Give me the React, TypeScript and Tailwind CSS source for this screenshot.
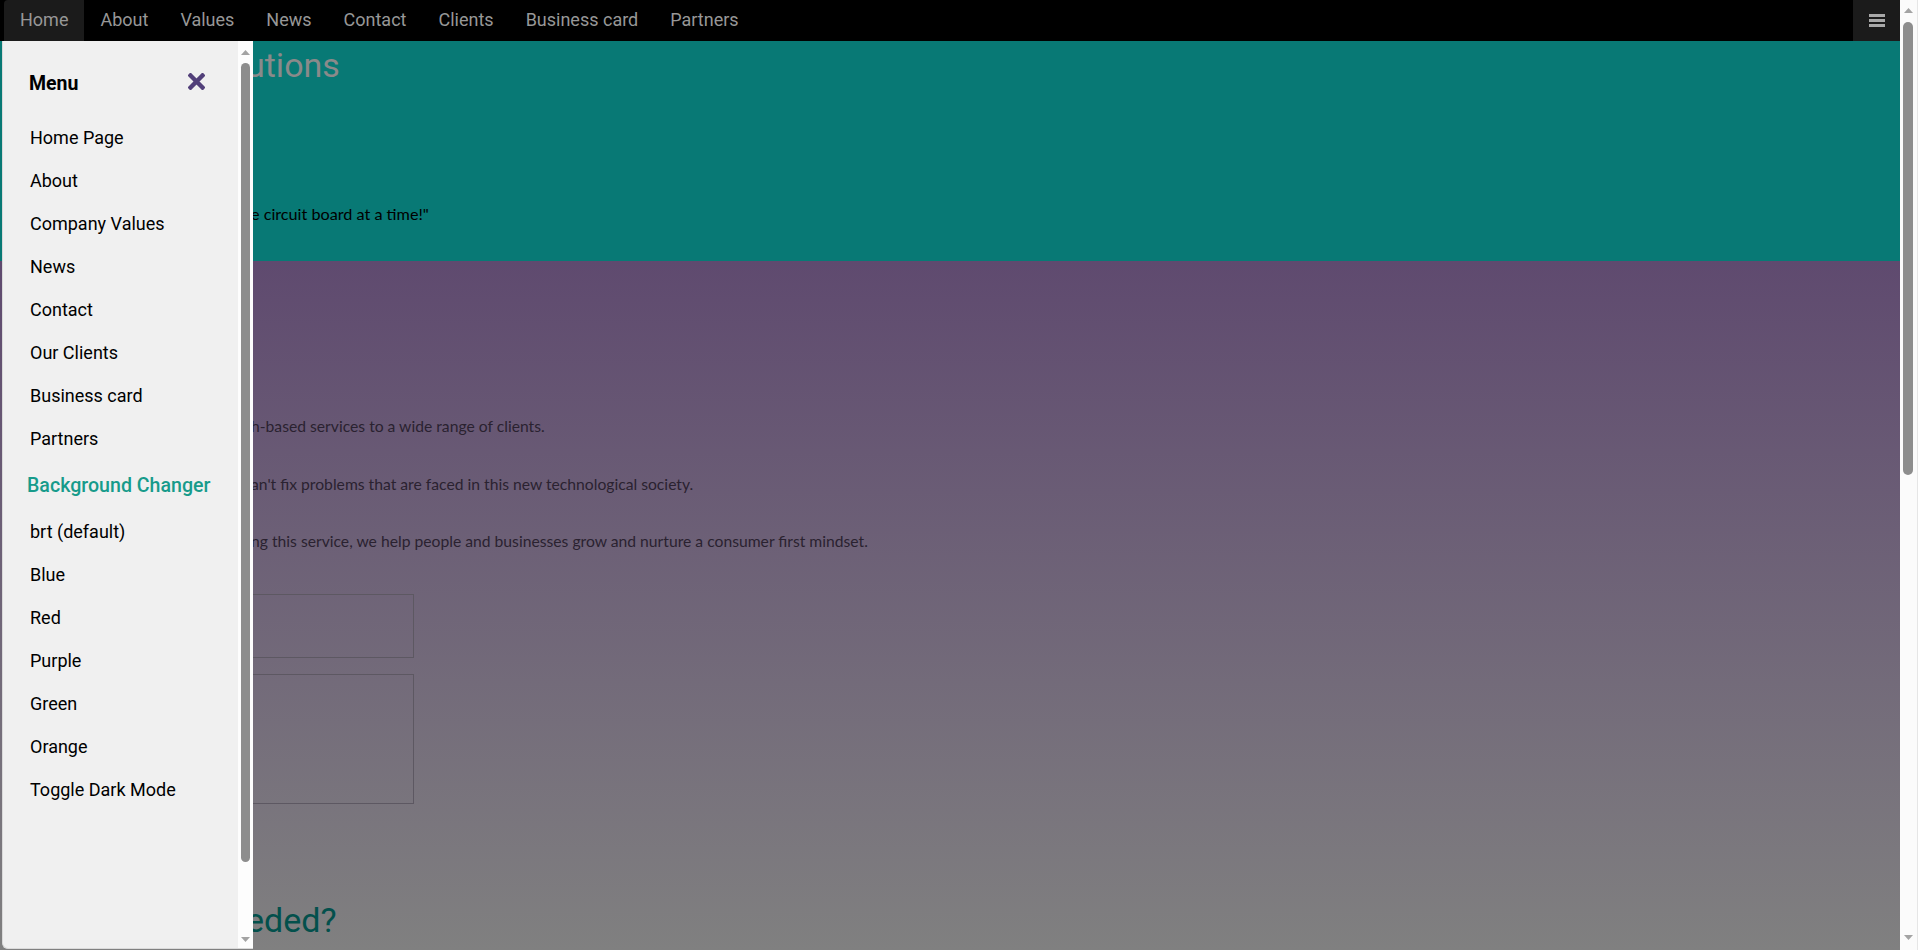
import React from "react";

const navItems = ["Home", "About", "Values", "News", "Contact", "Clients", "Business card", "Partners"];
const menuItems = ["Home Page", "About", "Company Values", "News", "Contact", "Our Clients", "Business card", "Partners"];
const bgItems = ["brt (default)", "Blue", "Red", "Purple", "Green", "Orange", "Toggle Dark Mode"];

function UpArrow() {
  return (
    <svg width="9" height="5" viewBox="0 0 9 5">
      <polygon points="4.5,0 9,5 0,5" fill="#a3a3a3" />
    </svg>
  );
}
function DownArrow() {
  return (
    <svg width="9" height="5" viewBox="0 0 9 5">
      <polygon points="0,0 9,0 4.5,5" fill="#a3a3a3" />
    </svg>
  );
}

export default function App() {
  const roboto = { fontFamily: "Roboto, 'Liberation Sans', sans-serif" };
  const lato = { fontFamily: "Lato, 'Open Sans', sans-serif" };
  return (
    <div className="relative flex h-[950px] w-[1918px] overflow-hidden bg-white" style={roboto}>
      {/* main column */}
      <div className="flex w-[1900px] flex-col">
        {/* top nav */}
        <nav className="flex h-[41px] shrink-0 items-stretch bg-black pl-[4px]">
          {navItems.map((n, i) => (
            <a
              key={n}
              className={
                i === 0
                  ? "flex items-center rounded-tl-[4px] bg-[#1b1b1b] px-4 pb-[2px] text-[18px] text-[#979797]"
                  : "flex items-center px-4 pb-[2px] text-[18px] text-[#979797]"
              }
            >
              {n}
            </a>
          ))}
          <button className="ml-auto flex w-[47px] flex-col items-center justify-center gap-[2.5px] bg-[#1b1b1b]">
            <span className="block h-[2.5px] w-[16px] bg-[#a8a8a8]" />
            <span className="block h-[2.5px] w-[16px] bg-[#a8a8a8]" />
            <span className="block h-[2.5px] w-[16px] bg-[#a8a8a8]" />
          </button>
        </nav>

        {/* teal hero (left part lies under the open side menu) */}
        <section className="h-[220px] shrink-0 bg-[#087975] pl-[246px] pt-[4px]">
          <h1 className="h-[40px] whitespace-nowrap text-[34px] leading-[40px] text-[#8a8a8a]">utions</h1>
          <p className="mt-[118px] whitespace-nowrap pl-[5px] text-[16.2px] leading-[22px] text-black" style={lato}>
            e circuit board at a time!"
          </p>
        </section>

        {/* purple section */}
        <section className="flex-1 bg-gradient-to-b from-[#5f4a6f] to-[#808080] pt-[154px]" style={lato}>
          <div className="flex flex-col gap-[35.5px] pl-[251px] text-[15.7px] leading-[22px] text-[#2a2230]">
            <p className="whitespace-nowrap">h-based services to a wide range of clients.</p>
            <p className="whitespace-nowrap">an't fix problems that are faced in this new technological society.</p>
            <p className="whitespace-nowrap">ng this service, we help people and businesses grow and nurture a consumer first mindset.</p>
          </div>
          <div className="ml-[16px] mt-[42px] flex w-[398px] flex-col gap-[16px]">
            <div className="h-[64px] border border-[#5d5862]" />
            <div className="h-[130px] border border-[#5d5862]" />
          </div>
          <h2 className="mt-[96px] whitespace-nowrap pl-[246px] text-[34px] leading-[40px] text-[#03504c]" style={roboto}>
            eded?
          </h2>
        </section>
      </div>

      {/* page scrollbar */}
      <div className="flex w-[18px] flex-col items-start border-r border-[#e6e6e6] bg-[#fbfbfb]">
        <div className="flex h-[20px] w-full items-center justify-center">
          <UpArrow />
        </div>
        <div className="ml-[3px] mt-[2px] h-[453px] w-[10px] rounded-full bg-[#8d8d8d]" />
        <div className="flex-1" />
        <div className="flex h-[15px] w-full items-start justify-center">
          <DownArrow />
        </div>
      </div>

      {/* side menu overlay */}
      <aside className="absolute left-[2px] top-[41px] flex h-[908px] w-[251px] overflow-hidden rounded-bl-[6px] border-b border-l border-[#dadada] bg-[#f0f0f0]">
        <div className="flex-1">
          <div className="flex items-center justify-between pl-[26px] pr-[33px] pt-[29px]">
            <span className="text-[19.5px] font-bold leading-[28px] text-black">Menu</span>
            <svg width="17" height="17" viewBox="0 0 17 17" className="-mt-[6px]">
              <path d="M2.5 2.5 L14.5 14.5 M14.5 2.5 L2.5 14.5" stroke="#52407a" strokeWidth="4.4" strokeLinecap="square" />
            </svg>
          </div>
          <div className="mt-[18.4px] flex flex-col">
            {menuItems.map((m) => (
              <a key={m} className="block py-2 pl-[27px] text-[18px] leading-[27px] text-black">
                {m}
              </a>
            ))}
            <div className="flex h-[50px] items-center pl-[24px] pt-[2px] text-[19.6px] font-medium leading-[28px] text-[#179b8b]">
              Background Changer
            </div>
            {bgItems.map((m) => (
              <a key={m} className="block py-2 pl-[27px] text-[18px] leading-[27px] text-black">
                {m}
              </a>
            ))}
          </div>
        </div>
        {/* side menu scrollbar */}
        <div className="flex w-[15px] flex-col bg-[#fdfdfd]">
          <div className="flex h-[22px] items-center justify-center">
            <UpArrow />
          </div>
          <div className="ml-[3px] h-[799px] w-[9px] rounded-full bg-[#8d8d8d]" />
          <div className="flex-1" />
          <div className="flex h-[18px] items-center justify-center">
            <DownArrow />
          </div>
        </div>
      </aside>
    </div>
  );
}
